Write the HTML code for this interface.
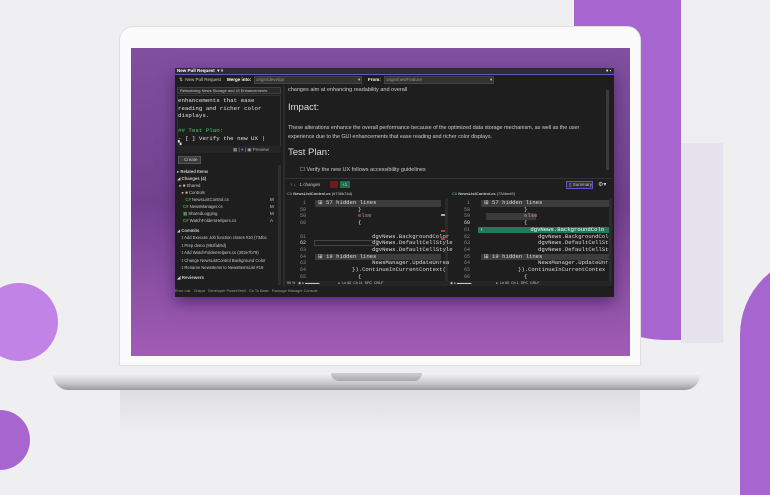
<!DOCTYPE html>
<html><head><meta charset="utf-8"><style>
*{margin:0;padding:0;box-sizing:border-box}
body{width:770px;height:433px;overflow:hidden;background:#efeff1;position:relative;font-family:"Liberation Sans",sans-serif}
.a{position:absolute}
.t{position:absolute;white-space:nowrap;color:#c8c8c8;font-size:4.5px;line-height:1}
.m{font-family:"Liberation Mono",monospace}
.row{position:absolute;height:6.7px;font-family:"Liberation Mono",monospace;font-size:5.6px;line-height:6.7px;color:#dcdcdc;white-space:pre}
.ln{position:absolute;font-family:"Liberation Mono",monospace;font-size:5px;color:#858585;line-height:6.7px}
</style></head><body>
<!-- background shapes -->
<div class="a" style="left:574px;top:0;width:107px;height:340px;background:#a766cf;border-bottom-left-radius:90px;border-bottom-right-radius:0"></div>
<div class="a" style="left:681px;top:143px;width:42px;height:200px;background:#e6e3ee"></div>
<div class="a" style="left:740px;top:255px;width:120px;height:240px;background:#a766cf;border-radius:80px 0 0 0"></div>
<div class="a" style="left:-20px;top:283px;width:78px;height:78px;background:#c184e6;border-radius:50%"></div>
<div class="a" style="left:-30px;top:410px;width:60px;height:60px;background:#a766cf;border-radius:50%"></div>
<!-- laptop -->
<div class="a" style="left:119px;top:26px;width:522px;height:340px;background:#fbfbfb;border-radius:14px 14px 0 0;border:1px solid #e0e0e3"></div>
<div class="a" style="left:131px;top:48px;width:499px;height:308px;background:linear-gradient(180deg,#80509f 0%,#72428f 50%,#a15cb6 100%)"></div>
<div class="a" style="left:53px;top:373px;width:647px;height:17px;background:linear-gradient(180deg,#f4f4f6,#c9c9cc 60%,#9a9a9e);border-radius:3px 3px 30px 30px"></div>
<div class="a" style="left:331px;top:373px;width:91px;height:8px;background:linear-gradient(180deg,#cfcfd2,#aaaaae);border-radius:0 0 8px 8px"></div>
<div class="a" style="left:120px;top:390px;width:520px;height:43px;background:linear-gradient(180deg,#dedee1,#efeff1)"></div>
<!-- IDE -->
<div class="a" style="left:175px;top:68px;width:439px;height:229px;background:#1e1e1e;box-shadow:0 6px 14px rgba(40,10,60,.5)"></div>
<div class="a" style="left:175px;top:68px;width:439px;height:7px;background:#2d2d30;border-bottom:1px solid #6a53c9"></div>
<div class="t" style="left:177px;top:69px;color:#fff;font-size:4.5px;font-weight:bold">New Pull Request &nbsp;▾ ×</div>
<div class="t" style="left:606px;top:69px;color:#fff">▾ ▪</div>
<!-- toolbar -->
<div class="t" style="left:179px;top:78px">⇅ &nbsp;New Pull Request</div>
<div class="t" style="left:227px;top:78px;color:#fff;font-weight:bold">Merge into:</div>
<div class="a" style="left:254px;top:76px;width:108px;height:8px;background:#333337;border:1px solid #444"></div>
<div class="t" style="left:256px;top:78px;color:#999">origin/develop</div>
<div class="t" style="left:358px;top:78px">▾</div>
<div class="t" style="left:368px;top:78px;color:#fff;font-weight:bold">From:</div>
<div class="a" style="left:384px;top:76px;width:110px;height:8px;background:#333337;border:1px solid #444"></div>
<div class="t" style="left:386px;top:78px;color:#999">origin/newFeature</div>
<div class="t" style="left:490px;top:78px">▾</div>
<!-- left pane -->
<div class="a" style="left:177px;top:87px;width:104px;height:7px;background:#2a2a2a;border:1px solid #3f3f46"></div>
<div class="t" style="left:180px;top:89px;font-size:4px">Refactoring News Storage and UI Enhancements</div>
<div class="a" style="left:177px;top:95px;width:104px;height:54px;background:#1e1e1e;border:1px solid #333"></div>
<div class="t m" style="left:178px;top:97px;font-size:5.8px;color:#e0e0e0;line-height:7.5px">enhancements that ease<br>reading and richer color<br>displays.<br><br><span style="color:#4ec96b">## Test Plan:</span><br>- [ ] Verify the new UX |</div>
<div class="t" style="left:178px;top:141px;color:#ddd">▚</div>
<div class="a" style="left:177px;top:146px;width:104px;height:7px;background:#252526"></div>
<div class="t" style="left:233px;top:148px;color:#aaa">▦ | <span style="color:#3d8fe0">●</span> | ▣ Preview</div>
<div class="a" style="left:178px;top:156px;width:23px;height:8px;background:#3a3a3d;border:1px solid #555"></div>
<div class="t" style="left:184px;top:158px">Create</div>
<div class="t" style="left:177px;top:168px;line-height:7px;font-size:4.3px">
▸ <b>Related Items</b><br>◢ <b>Changes (4)</b><br>&nbsp;&nbsp;▸ <span style="color:#dcb67a">■</span> Shared<br>&nbsp;&nbsp;&nbsp;&nbsp;▸ <span style="color:#dcb67a">■</span> Controls<br>&nbsp;&nbsp;&nbsp;&nbsp;&nbsp;&nbsp;&nbsp;<span style="color:#6c6">C#</span> NewsListControl.cs<br>&nbsp;&nbsp;&nbsp;&nbsp;&nbsp;<span style="color:#6c6">C#</span> NewsManager.cs<br>&nbsp;&nbsp;&nbsp;&nbsp;&nbsp;<span style="color:#6c6">▦</span> SharedLogging<br>&nbsp;&nbsp;&nbsp;&nbsp;&nbsp;<span style="color:#6c6">C#</span> WatchFoldersHelpers.cs</div>
<div class="t" style="left:270px;top:196px;line-height:7px">M<br>M<br>M<br>A</div>
<div class="t" style="left:177px;top:227px;line-height:7.4px;font-size:4.2px">◢ <b>Commits</b><br>&nbsp;&nbsp;&nbsp;&nbsp;⟟ Add Execute Job function closes #10 (734bc<br>&nbsp;&nbsp;&nbsp;&nbsp;⟟ Prep demo (982fab5d)<br>&nbsp;&nbsp;&nbsp;&nbsp;⟟ Add WatchFolderHelpers.cs (302e7b79)<br>&nbsp;&nbsp;&nbsp;&nbsp;⟟ Change NewsListControl Background Color<br>&nbsp;&nbsp;&nbsp;&nbsp;⟟ Rename NewsItems to NewsItemsList #19</div>
<div class="t" style="left:177px;top:276px;font-weight:bold">◢ Reviewers</div>
<div class="a" style="left:278px;top:165px;width:3px;height:120px;background:#2e2e2e"></div>
<div class="a" style="left:283px;top:86px;width:2px;height:200px;background:#2b2b2b"></div>
<!-- preview -->
<div class="t" style="left:288px;top:88px;font-size:5.5px;color:#ccc">changes aim at enhancing readability and overall</div>
<div class="t" style="left:288px;top:103px;font-size:9.5px;color:#ddd">Impact:</div>
<div class="t" style="left:288px;top:124px;font-size:5.5px;color:#ccc;line-height:9px;letter-spacing:-0.05px">These alterations enhance the overall performance because of the optimized data storage mechanism, as well as the user<br>experience due to the GUI enhancements that ease reading and richer color displays.</div>
<div class="t" style="left:288px;top:148px;font-size:9.5px;color:#ddd">Test Plan:</div>
<div class="t" style="left:300px;top:168px;font-size:5.5px;color:#ccc">☐ Verify the new UX follows accessibility guidelines</div>
<div class="a" style="left:606px;top:90px;width:3px;height:80px;background:#3a3a3a"></div>
<!-- diff toolbar -->
<div class="a" style="left:285px;top:178px;width:327px;height:1px;background:#333"></div>
<div class="t" style="left:290px;top:183px">↑ ↓ &nbsp;&nbsp;1 changes</div>
<div class="a" style="left:330px;top:181px;width:8px;height:7px;background:#6e1b1b"></div>
<div class="a" style="left:340px;top:181px;width:10px;height:7px;background:#1f6f4f"></div>
<div class="t" style="left:342px;top:183px">+1</div>
<div class="a" style="left:566px;top:181px;width:27px;height:8px;border:1px solid #6a53c9;background:#2b2b30"></div>
<div class="t" style="left:569px;top:183px">▯ Summary</div>
<div class="t" style="left:598px;top:182px;font-size:6px">⚙▾</div>
<!-- diff headers -->
<div class="t" style="left:287px;top:192px;font-size:4px"><span style="color:#6c6">C#</span> <b>NewsListControl.cs</b> (#736b74d)</div>
<div class="t" style="left:452px;top:192px;font-size:4px"><span style="color:#6c6">C#</span> <b>NewsListControl.cs</b> (734bed9)</div>
<!-- left diff -->
<div class="a" style="left:445px;top:198px;width:3px;height:85px;background:#2b2b2b"></div>
<div class="a" style="left:315px;top:200px;width:126px;height:6.7px;background:#3c3c3c"></div>
<div class="a" style="left:315px;top:253.6px;width:126px;height:6.7px;background:#3c3c3c"></div>
<div class="a" style="left:314px;top:240px;width:65px;height:6px;border:1px solid #444"></div>
<div class="ln" style="left:296px;top:200px;text-align:right;width:10px">1<br>58<br>59<br>60<br><br>61<br><span style="color:#ddd">62</span><br>63<br>64<br>63<br>64<br>65</div>
<div class="row" style="left:318px;top:200px">⊞ 57 hidden lines</div>
<div class="row" style="left:358px;top:206.7px">}</div>
<div class="row" style="left:358px;top:213.4px;color:#c586c0">else</div>
<div class="row" style="left:358px;top:220.1px">{</div>
<div class="row" style="left:372px;top:233.5px">dgvNews.BackgroundColor</div>
<div class="row" style="left:372px;top:240.2px">dgvNews.DefaultCellStyle</div>
<div class="row" style="left:372px;top:246.9px">dgvNews.DefaultCellStyle</div>
<div class="row" style="left:318px;top:253.6px">⊞ 19 hidden lines</div>
<div class="row" style="left:372px;top:260.3px">NewsManager.UpdateUnrea</div>
<div class="row" style="left:352px;top:267px">}).ContinueInCurrentContext(</div>
<div class="row" style="left:358px;top:273.7px">{</div>
<div class="a" style="left:441px;top:214px;width:4px;height:2px;background:#aaa"></div>
<div class="a" style="left:441px;top:230px;width:4px;height:2px;background:#c33"></div>
<div class="a" style="left:441px;top:238px;width:4px;height:2px;background:#c33"></div>
<!-- right diff -->
<div class="a" style="left:481px;top:200px;width:128px;height:6.7px;background:#3c3c3c"></div>
<div class="a" style="left:481px;top:253.6px;width:128px;height:6.7px;background:#3c3c3c"></div>
<div class="a" style="left:486px;top:213.4px;width:50px;height:6.7px;background:#3a3a3a"></div>
<div class="a" style="left:478px;top:226.8px;width:131px;height:6.7px;background:#1f7a5a"></div>
<div class="ln" style="left:460px;top:200px;text-align:right;width:10px">1<br>58<br>59<br><span style="color:#ddd">60</span><br>61<br>62<br>63<br>64<br>65<br>64<br>65<br>66</div>
<div class="row" style="left:484px;top:200px">⊞ 57 hidden lines</div>
<div class="row" style="left:524px;top:206.7px">}</div>
<div class="row" style="left:524px;top:213.4px;color:#c586c0">else</div>
<div class="row" style="left:524px;top:220.1px">{</div>
<div class="row" style="left:480px;top:226.8px;color:#fff">‹              dgvNews.BackgroundColo</div>
<div class="row" style="left:538px;top:233.5px">dgvNews.BackgroundColo</div>
<div class="row" style="left:538px;top:240.2px">dgvNews.DefaultCellSty</div>
<div class="row" style="left:538px;top:246.9px">dgvNews.DefaultCellSty</div>
<div class="row" style="left:484px;top:253.6px">⊞ 19 hidden lines</div>
<div class="row" style="left:538px;top:260.3px">NewsManager.UpdateUnre</div>
<div class="row" style="left:518px;top:267px">}).ContinueInCurrentContex</div>
<div class="row" style="left:524px;top:273.7px">{</div>
<div class="a" style="left:609px;top:198px;width:3px;height:85px;background:#2b2b2b"></div>
<!-- status bars -->
<div class="a" style="left:285px;top:281px;width:327px;height:5px;background:#252526"></div>
<div class="t" style="left:287px;top:282px;font-size:3.6px">90 % &nbsp;&nbsp;◉ ▸ ▬▬▬▬ &nbsp;&nbsp;&nbsp;&nbsp;&nbsp;&nbsp;&nbsp;&nbsp;&nbsp;&nbsp;&nbsp;&nbsp;&nbsp;&nbsp;&nbsp;&nbsp;&nbsp;&nbsp;▸ &nbsp;Ln 62 &nbsp;Ch 11 &nbsp;SPC &nbsp;CRLF</div>
<div class="t" style="left:450px;top:282px;font-size:3.6px">◉ ▸ ▬▬▬▬ &nbsp;&nbsp;&nbsp;&nbsp;&nbsp;&nbsp;&nbsp;&nbsp;&nbsp;&nbsp;&nbsp;&nbsp;&nbsp;&nbsp;&nbsp;&nbsp;&nbsp;&nbsp;&nbsp;&nbsp;&nbsp;&nbsp;&nbsp;&nbsp;▸ &nbsp;Ln 60 &nbsp;Ch 1 &nbsp;SPC &nbsp;CRLF</div>
<div class="t" style="left:175px;top:290px;font-size:3.8px;color:#999">Error List &nbsp; Output &nbsp; Developer PowerShell &nbsp; Go To Base &nbsp; Package Manager Console</div>
</body></html>
